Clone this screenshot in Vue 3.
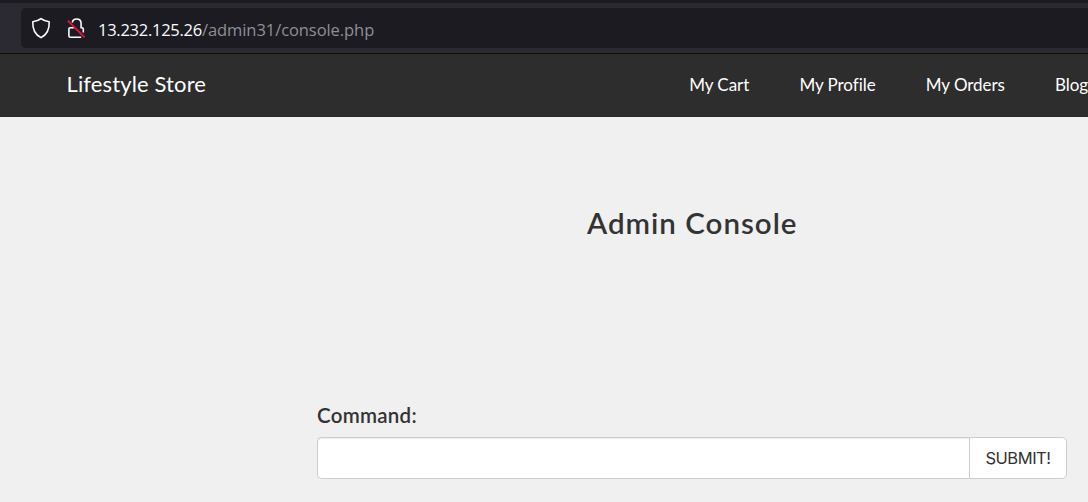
<script setup>
const links = ['My Cart', 'My Profile', 'My Orders', 'Blog']
</script>

<template>
  <div class="window">
    <div class="toolbar">
      <div class="urlbar">
        <svg class="shield" width="20" height="22" viewBox="0 0 20 22" fill="none">
          <path d="M10 1.6C8 3.3 4.8 4.3 1.8 4.7C1.5 11.7 3.7 17.5 10 20.6C16.3 17.5 18.5 11.7 18.2 4.7C15.2 4.3 12 3.3 10 1.6Z" stroke="#fbfbfe" stroke-width="1.6" stroke-linejoin="round" />
        </svg>
        <svg class="lock" width="19" height="22" viewBox="0 0 19 22" fill="none">
          <path d="M5.3 4.5C5.7 2.1 7.3 1 9.6 1C12.4 1 14.1 2.8 14.1 5.5V9.7H15Q16.3 9.7 16.3 11V14.5M7 9.7H3.2Q1.9 9.7 1.9 11V17.7Q1.9 19.3 3.5 19.3H14.2" stroke="#fbfbfe" stroke-width="1.6" />
          <path d="M.8 2.7L17.6 19.4" stroke="#e8113b" stroke-width="1.9" />
        </svg>
        <div class="address"><span class="host">13.232.125.26</span><span class="path">/admin31/console.php</span></div>
      </div>
    </div>
    <nav class="navbar">
      <span class="brand">Lifestyle Store</span>
      <div class="links">
        <span v-for="link in links" :key="link">{{ link }}</span>
      </div>
    </nav>
    <main>
      <h1>Admin Console</h1>
      <form @submit.prevent>
        <label for="command">Command:</label>
        <div class="group">
          <input id="command" type="text" />
          <button type="submit">SUBMIT!</button>
        </div>
      </form>
    </main>
  </div>
</template>

<style>
body { background: #f0f0f0; overflow: hidden; }
</style>

<style scoped>
.window { width: 1088px; height: 502px; overflow: hidden; background: #f0f0f0; color: #333; font-family: Lato, "Open Sans", sans-serif; }
.toolbar { box-sizing: border-box; height: 54px; padding: 5px 0 5px 21px; background: #2b2a33; border-top: 3px solid #1c1b22; border-bottom: 1px solid #0c0c0d; }
.urlbar { display: flex; height: 40px; background: #1c1b22; border-radius: 5px 0 0 5px; }
.shield { margin: 9px 0 0 10px; }
.lock { margin: 10px 0 0 16px; }
.address { margin-left: 12px; line-height: 43px; font-family: "Open Sans", sans-serif; font-size: 16.5px; white-space: nowrap; }
.host { color: #fbfbfe; letter-spacing: -.26px; }
.path { color: #8f8f96; letter-spacing: -.07px; }
.navbar { box-sizing: border-box; display: flex; height: 63px; background: #2d2d2d; border-bottom: 1px solid #292929; color: #fff; white-space: nowrap; }
.brand { margin-left: 66.5px; width: 622.7px; flex: none; font-size: 22px; line-height: 60px; letter-spacing: .13px; }
.links { display: flex; gap: 50.2px; font-size: 17px; line-height: 61px; letter-spacing: -.05px; }
h1 { margin: 86px 0 0 587px; height: 40px; font-size: 29.5px; line-height: 40px; font-weight: 600; letter-spacing: 1px; white-space: nowrap; }
form { margin: 156px 0 0 317px; width: 750px; }
label { display: block; height: 38px; font-size: 20.5px; line-height: 32px; font-weight: 600; letter-spacing: .27px; }
.group { display: flex; height: 42px; }
input, button { box-sizing: border-box; margin: 0; height: 42px; border: 1px solid #ccc; background: #fff; }
input { width: 652px; border-right: 0; border-radius: 5px 0 0 5px; box-shadow: inset 0 1px 1px rgba(0, 0, 0, .08); outline: 0; }
button { width: 98px; padding: 0; border-radius: 0 5px 5px 0; color: #333; font: 16.5px "Inter", sans-serif; letter-spacing: -.45px; white-space: nowrap; }
</style>
